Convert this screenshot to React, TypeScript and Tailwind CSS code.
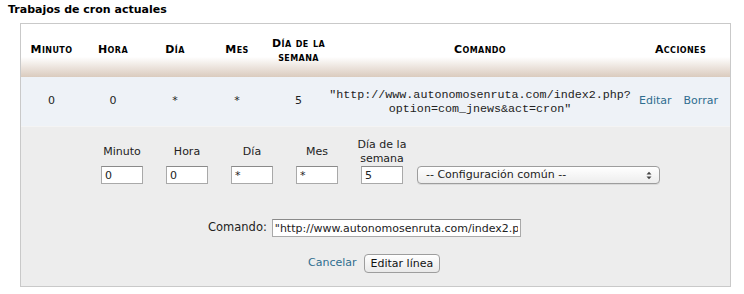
import { useState } from "react";

const cols = "grid grid-cols-[61px_62px_62px_62px_61px_302px_99px]";

const headers = ["Minuto", "Hora", "Día", "Mes", "Día de la semana", "Comando", "Acciones"];

export default function App() {
  const [fields, setFields] = useState({ minuto: "0", hora: "0", dia: "*", mes: "*", semana: "5" });
  const [comando, setComando] = useState('"http://www.autonomosenruta.com/index2.php?option=com_jnews&act=cron"');

  const edit = [
    { key: "minuto", label: "Minuto" },
    { key: "hora", label: "Hora" },
    { key: "dia", label: "Día" },
    { key: "mes", label: "Mes" },
    { key: "semana", label: "Día de la semana" },
  ] as const;

  return (
    <div className="h-[294px] w-[744px] bg-white font-['DejaVu_Sans',sans-serif] text-[11px] text-[#222]">
      <h2 className="pl-2 pt-[3px] text-[11px] font-bold leading-[13px] text-black">Trabajos de cron actuales</h2>

      <div className="ml-5 mt-[7px] w-[711px] border border-[#c9c9c9]">
        {/* cabecera */}
        <div className={`${cols} h-[53px] items-center bg-gradient-to-b from-white from-[62%] to-[#dacbbe] text-center font-bold text-black [font-variant:small-caps] tracking-[0.4px]`}>
          {headers.map((h) => (
            <div key={h} className={h === "Día de la semana" ? "px-1 leading-[14px]" : ""}>
              {h}
            </div>
          ))}
        </div>

        {/* fila actual */}
        <div className={`${cols} h-[49px] items-center bg-[#eef2f7] text-center`}>
          <div>0</div>
          <div>0</div>
          <div>*</div>
          <div>*</div>
          <div>5</div>
          <div className="font-['Liberation_Mono',monospace] text-[11.7px] leading-[14px]">
            "http://www.autonomosenruta.com/index2.php?
            <br />
            option=com_jnews&amp;act=cron"
          </div>
          <div className="flex justify-center gap-3 pr-1 text-[#2f6d8f]">
            <a href="#">Editar</a>
            <a href="#">Borrar</a>
          </div>
        </div>

        {/* edición */}
        <div className="border-t border-[#f4f4f4] bg-[#ededed] pb-[13px] pt-[11px]">
          <div className="ml-[80px] grid grid-cols-[42px_42px_42px_42px_42px_243px] gap-x-[23px]">
            {edit.map((f) => (
              <span key={f.key} className="-mx-[10px] flex h-[28px] items-center justify-center text-center leading-[14px]">
                {f.label}
              </span>
            ))}
            <span />
            {edit.map((f) => (
              <input
                key={f.key}
                value={fields[f.key]}
                onChange={(e) => setFields({ ...fields, [f.key]: e.target.value })}
                className="h-[18px] w-[42px] border border-[#a9a9a9] border-t-[#8a8a8a] bg-white px-[3px] text-[11px] outline-none"
              />
            ))}
            <div className="-ml-[9px] flex h-[18px] w-[243px] items-center justify-between rounded-[4px] border border-[#9d9d9d] bg-gradient-to-b from-white to-[#ededed] pl-[8px] pr-[7px] shadow-[0_1px_0_rgba(0,0,0,0.08)]">
              <span>-- Configuración común --</span>
              <svg width="6" height="9" viewBox="0 0 6 9" className="text-[#444]">
                <path d="M0.5 3.5 L3 0.8 L5.5 3.5 Z M0.5 5.5 L3 8.2 L5.5 5.5 Z" fill="currentColor" />
              </svg>
            </div>
          </div>

          <div className="ml-[187px] mt-[35px] flex items-center gap-[5px]">
            <span className="text-[11.5px]">Comando:</span>
            <input
              value={comando}
              onChange={(e) => setComando(e.target.value)}
              className="h-[18px] w-[249px] border border-[#a9a9a9] border-t-[#8a8a8a] bg-white px-[2px] text-[11px] outline-none"
            />
          </div>

          <div className="ml-[287px] mt-[17px] flex items-center gap-[7px]">
            <a href="#" className="text-[#2f6d8f]">Cancelar</a>
            <button className="h-[19px] rounded-[4px] border border-[#9d9d9d] bg-gradient-to-b from-white to-[#e9e9e9] px-[6px] text-[11px] leading-none text-[#111]">
              Editar línea
            </button>
          </div>
        </div>
      </div>
    </div>
  );
}
